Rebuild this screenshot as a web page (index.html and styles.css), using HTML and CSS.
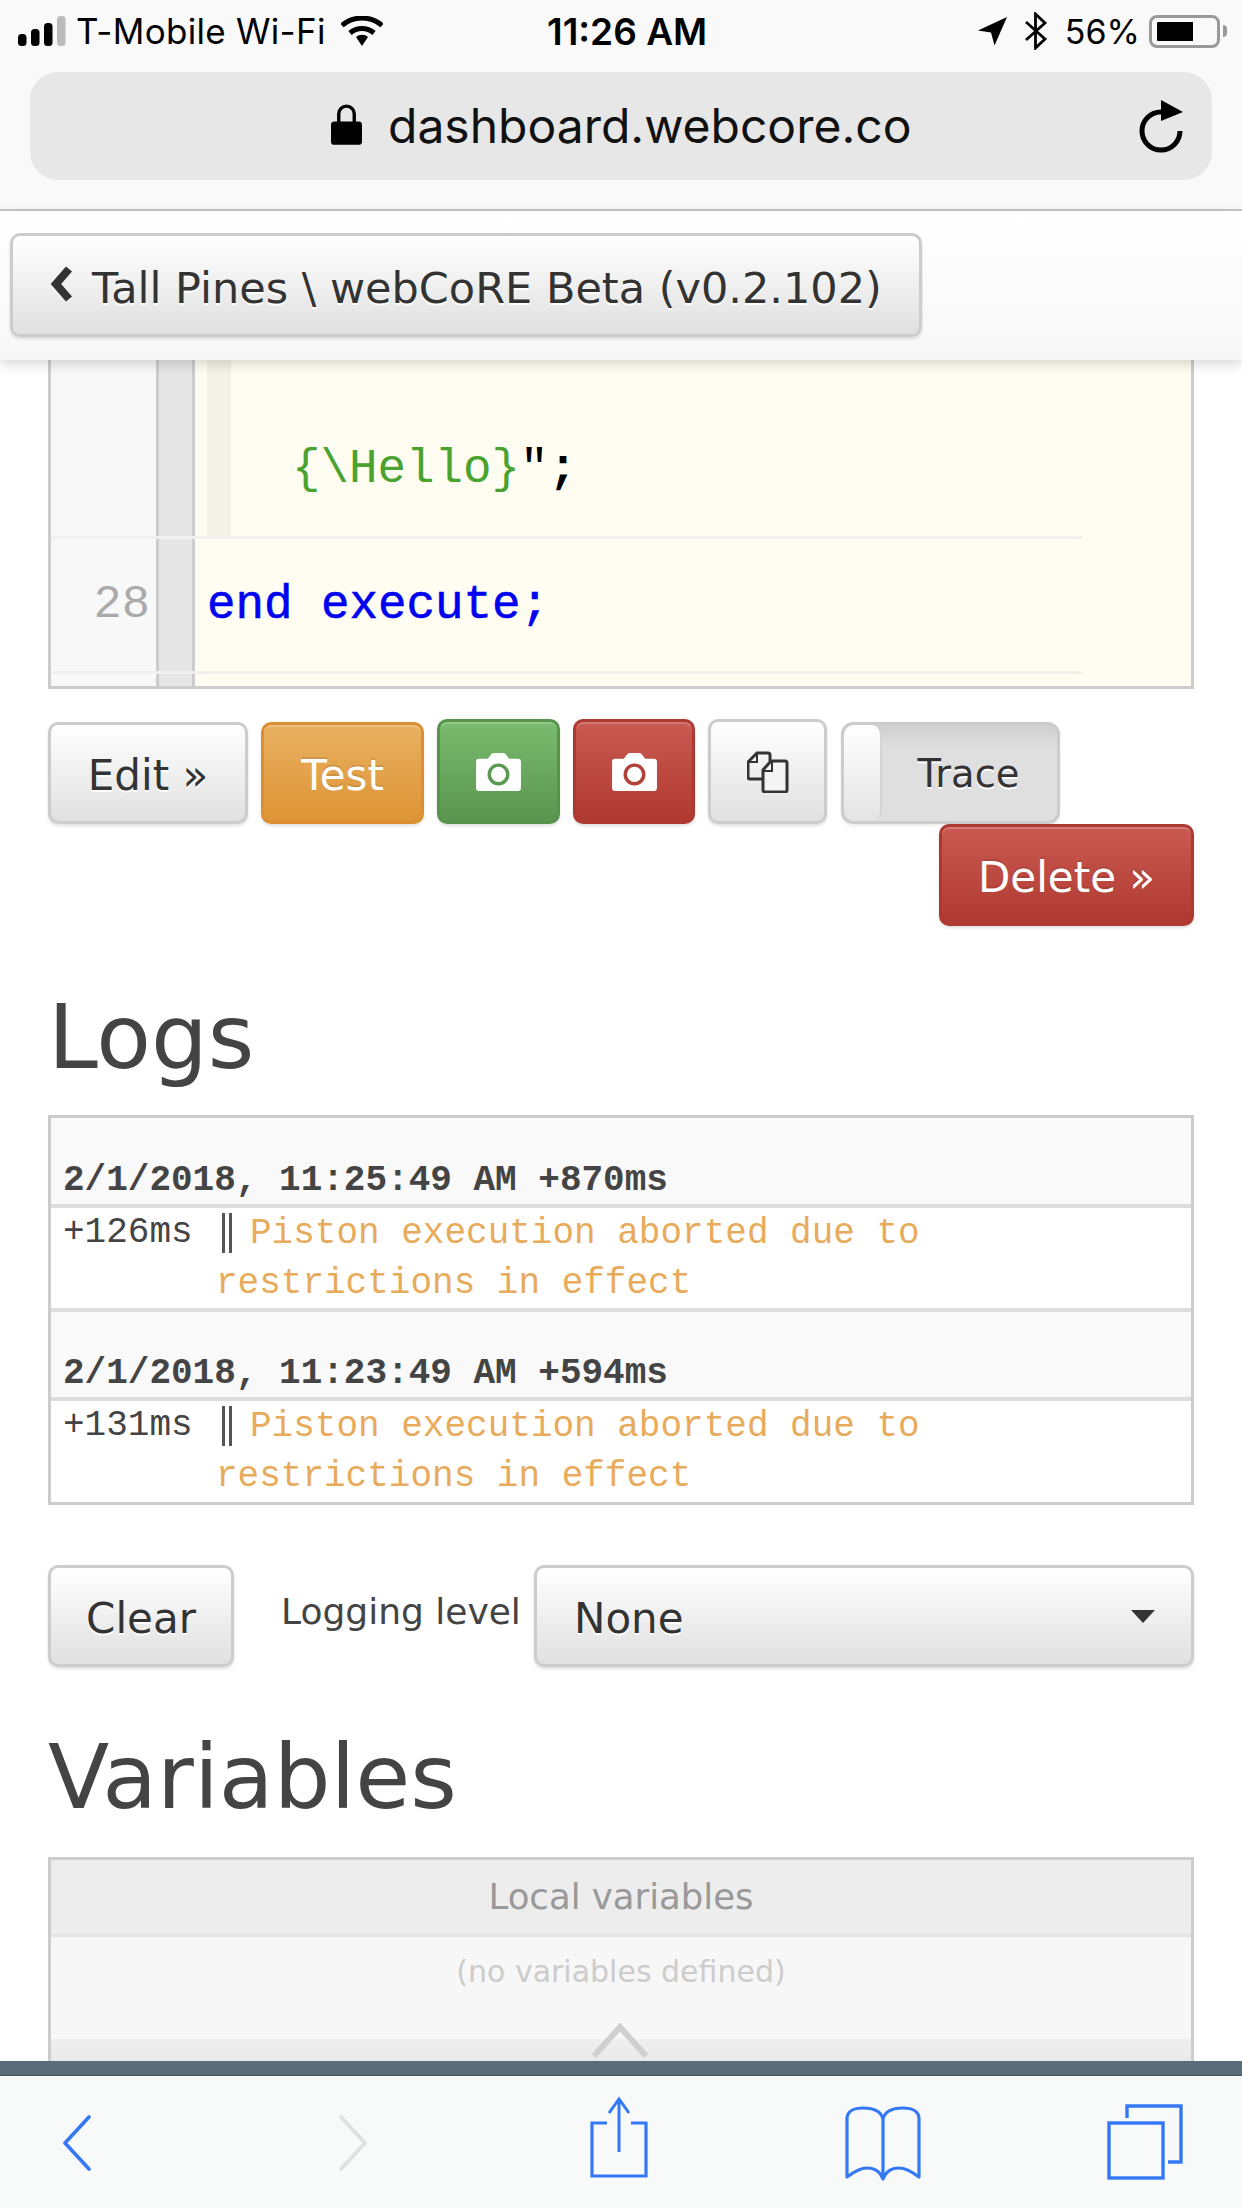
FILE: index.html
```html
<!DOCTYPE html>
<html lang="en">
<head>
<meta charset="utf-8">
<title>webCoRE Dashboard</title>
<link rel="stylesheet" href="styles.css">
</head>
<body>
<div class="screen">
  <header class="chrome">
    <div class="status">
      <div class="status-left">
        <svg class="signal" viewBox="0 0 48 30"><rect x="0" y="18" width="8.500" height="12" rx="3.500" fill="#000"/><rect x="13" y="13" width="8.500" height="17" rx="3.500" fill="#000"/><rect x="26" y="7" width="8.500" height="23" rx="3.500" fill="#000"/><rect x="39" y="0" width="8.500" height="30" rx="3.500" fill="#bbb"/></svg>
        <span class="carrier">T-Mobile Wi-Fi</span>
        <svg class="wifi" viewBox="0 0 42 30"><path d="M1 9.500C12-.5 30-.5 41 9.500" fill="none" stroke="#000" stroke-width="5"/><path d="M9 17c7-6 17-6 24 0" fill="none" stroke="#000" stroke-width="5"/><path d="M15 21c3.600-3 8.400-3 12 0L21 30z" fill="#000"/></svg>
      </div>
      <div class="clock">11:26 AM</div>
      <div class="status-right">
        <svg class="loc" viewBox="0 0 30 30"><path d="M29 1 0 14.500l13 2 3.500 13z" fill="#000"/></svg>
        <svg class="bt" viewBox="0 0 24 38"><path d="M2 10 21 27 11.500 36V2L21 11 2 28" fill="none" stroke="#000" stroke-width="2.800"/></svg>
        <span class="pct">56%</span>
        <span class="battery"><span class="battery-fill"></span></span>
        <span class="battery-tip"></span>
      </div>
    </div>
    <div class="urlbar">
      <svg class="lock" viewBox="0 0 32 42"><path d="M8 20V10a8 8 0 0 1 16 0v10" fill="none" stroke="#000" stroke-width="3.500"/><rect x="0" y="18" width="32" height="24" rx="3.500" fill="#000"/></svg>
      <span class="url">dashboard.webcore.co</span>
      <svg class="reload" viewBox="0 0 46 54"><path d="M41 31A19 19 0 1 1 22 12" fill="none" stroke="#000" stroke-width="5"/><path d="M22 0 44 12 22 21z" fill="#000"/></svg>
    </div>
  </header>

  <div class="pagehead">
    <button class="btn btn-back"><svg class="chev" viewBox="0 0 26 38"><path d="M20 4 7 19l13 15" fill="none" stroke="#333" stroke-width="8"/></svg>Tall Pines \ webCoRE Beta (v0.2.102)</button>
  </div>

  <main class="content">
    <div class="code">
      <div class="code-row code-row-a">
        <div class="gutter"></div>
        <div class="gutter-bar"></div>
        <div class="guide"></div>
        <div class="code-text hello"><span class="str">{\Hello}</span>"<b class="semi">;</b></div>
      </div>
      <div class="code-row code-row-b">
        <div class="gutter num">28</div>
        <div class="gutter-bar"></div>
        <div class="code-text kw">end execute;</div>
      </div>
      <div class="code-row code-row-c">
        <div class="gutter"></div>
        <div class="gutter-bar"></div>
      </div>
    </div>

    <div class="actions">
      <button class="btn btn-edit">Edit »</button>
      <button class="btn btn-test">Test</button>
      <button class="btn btn-green btn-tall">
        <svg class="cam" viewBox="0 0 46 42"><path d="M3 8h9l3-4q1-2 3-2h10q2 0 3 2l3 4h9q3 0 3 3v27q0 3-3 3H3q-3 0-3-3V11q0-3 3-3z" fill="#fff"/><circle cx="23" cy="24" r="9.500" fill="none" stroke="#5a9a50" stroke-width="3.500"/></svg>
      </button>
      <button class="btn btn-red btn-tall">
        <svg class="cam" viewBox="0 0 46 42"><path d="M3 8h9l3-4q1-2 3-2h10q2 0 3 2l3 4h9q3 0 3 3v27q0 3-3 3H3q-3 0-3-3V11q0-3 3-3z" fill="#fff"/><circle cx="23" cy="24" r="9.500" fill="none" stroke="#b0413a" stroke-width="3.500"/></svg>
      </button>
      <button class="btn btn-copy btn-tall">
        <svg class="copy" viewBox="0 0 42 42"><path d="M25 28H3q-2 0-2-2V11l9-9h11q2 0 2 2v6" fill="none" stroke="#333" stroke-width="3"/><path d="M2 11h8V3" fill="none" stroke="#333" stroke-width="2"/><path d="M16 19l8-9h14q2 0 2 2v27q0 2-2 2H18q-2 0-2-2z" fill="#f4f4f4" stroke="#333" stroke-width="3"/><path d="M17 20h8v-9" fill="none" stroke="#333" stroke-width="2"/></svg>
      </button>
      <div class="toggle"><span class="knob"></span><span class="toggle-label">Trace</span></div>
    </div>
    <div class="delete-row"><button class="btn btn-red btn-delete">Delete »</button></div>

    <h2 class="h-logs">Logs</h2>
    <div class="logs">
      <div class="log-head">2/1/2018, 11:25:49 AM +870ms</div>
      <div class="log-body">
        <div class="log-line"><span class="log-time">+126ms</span><span class="log-sep"></span><span class="log-msg">Piston execution aborted due to</span></div>
        <div class="log-line log-cont"><span class="log-msg">restrictions in effect</span></div>
      </div>
      <div class="log-head log-head-next">2/1/2018, 11:23:49 AM +594ms</div>
      <div class="log-body">
        <div class="log-line"><span class="log-time">+131ms</span><span class="log-sep"></span><span class="log-msg">Piston execution aborted due to</span></div>
        <div class="log-line log-cont"><span class="log-msg">restrictions in effect</span></div>
      </div>
    </div>

    <div class="log-controls">
      <button class="btn btn-clear">Clear</button>
      <span class="level-label">Logging level</span>
      <div class="btn select">None<span class="caret"></span></div>
    </div>

    <h2 class="h-vars">Variables</h2>
    <div class="vars">
      <div class="vars-head">Local variables</div>
      <div class="vars-body">(no variables defined)</div>
      <div class="vars-foot">
        <svg class="up" viewBox="0 0 58 36"><path d="M3 33 29 4l26 29" fill="none" stroke="#cfcfcf" stroke-width="6"/></svg>
      </div>
    </div>
  </main>

  <footer class="toolbar">
    <div class="toolbar-strip"></div>
    <div class="toolbar-icons">
      <svg class="tb tb-back" viewBox="0 0 30 56"><path d="M27 2 3 28l24 26" fill="none" stroke="#3478f6" stroke-width="3.600" stroke-linecap="round" stroke-linejoin="round"/></svg>
      <svg class="tb tb-fwd" viewBox="0 0 30 56"><path d="M3 2l24 26L3 54" fill="none" stroke="#e0e0e0" stroke-width="3.600" stroke-linecap="round" stroke-linejoin="round"/></svg>
      <svg class="tb tb-share" viewBox="0 0 58 82"><path d="M17 27H2V80H56V27H41" fill="none" stroke="#3478f6" stroke-width="3.200"/><path d="M29 56V3M19 17 29 3l10 14" fill="none" stroke="#3478f6" stroke-width="3"/></svg>
      <svg class="tb tb-book" viewBox="0 0 76 76"><path d="M38 14C36 6 28 3 18 3 8 3 2 7 2 14v58c8-6 14-9 20-9 8 0 13 3 16 11 3-8 8-11 16-11 6 0 12 3 20 9V14c0-7-6-11-16-11-10 0-18 3-20 11v60" fill="none" stroke="#3478f6" stroke-width="3.200" stroke-linejoin="round"/></svg>
      <svg class="tb tb-tabs" viewBox="0 0 76 76"><rect x="2" y="19" width="54" height="55" fill="none" stroke="#3478f6" stroke-width="3.400"/><path d="M20 14V2H74V58H61" fill="none" stroke="#3478f6" stroke-width="3.400"/></svg>
    </div>
  </footer>
</div>
</body>
</html>
```
FILE: styles.css
```css
* { box-sizing: border-box; }
html, body { margin: 0; padding: 0; }
body { width: 1242px; height: 2208px; overflow: hidden; background: #fff; font-family: "DejaVu Sans", sans-serif; color: #444; }
.screen { width: 1242px; height: 2208px; position: relative; overflow: hidden; display: flex; flex-direction: column; }

.chrome { height: 211px; flex: none; background: #f9f9f9; border-bottom: 2px solid #c8c8c8; padding-top: 10px; }
.status { height: 42px; display: flex; justify-content: space-between; align-items: center; font-family: Inter, sans-serif; color: #000; position: relative; padding: 0 15px 0 18px; }
.status-left, .status-right { display: flex; align-items: center; }
.signal { width: 48px; height: 30px; }
.carrier { font-size: 35px; margin-left: 10px; letter-spacing: .3px; }
.wifi { width: 42px; height: 30px; margin-left: 15px; }
.clock { position: absolute; left: 547px; font-size: 37px; font-weight: 600; }
.loc { width: 30px; height: 30px; }
.bt { width: 24px; height: 38px; margin-left: 16px; }
.pct { font-size: 34px; margin-left: 17px; }
.battery { width: 71px; height: 33px; border: 3px solid #999; border-radius: 8px; margin-left: 9px; padding: 4px; display: flex; }
.battery-fill { width: 36px; height: 100%; background: #000; border-radius: 1px 0 0 1px; margin-left: 1px; }
.battery-tip { width: 4px; height: 12px; background: #999; margin-left: 3px; border-radius: 0 4px 4px 0; }

.urlbar { margin: 20px 30px 0; height: 108px; border-radius: 28px; background: #e7e7e7; display: flex; align-items: center; position: relative; padding-left: 301px; color: #000; font-family: Inter, sans-serif; }
.lock { width: 31px; height: 41px; margin-top: -3px; flex: none; }
.url { font-size: 48px; margin-left: 26px; margin-top: -2px; color: #111; font-weight: 400; }
.reload { width: 46px; height: 54px; position: absolute; right: 27px; top: 28px; }

.pagehead { height: 149px; flex: none; background: linear-gradient(#fff, #f7f7f7); box-shadow: 0 4px 12px rgba(0,0,0,.16); padding: 22px 10px 0; position: relative; z-index: 3; }
.btn { font-family: "DejaVu Sans", sans-serif; color: #333; border: 3px solid #ccc; border-radius: 10px; background: linear-gradient(#fff, #e0e0e0); box-shadow: 0 2px 3px rgba(0,0,0,.12); font-size: 42px; padding: 5px 0 0; display: inline-flex; align-items: center; justify-content: center; text-shadow: 0 2px 0 #fff; }
.btn-back { width: 912px; height: 104px; font-size: 43px; justify-content: flex-start; padding-left: 36px; }
.chev { width: 26px; height: 38px; margin-right: 17px; margin-top: -7px; flex: none; }

.content { flex: 1; padding: 0 48px; min-height: 0; }
.code { height: 329px; width: 1146px; border: 3px solid #ccc; border-top: 0; background: #fffdf1; display: flex; flex-direction: column; }
.code-row { display: flex; position: relative; }
.code-row-a { height: 176px; }
.code-row-b { height: 135px; border-top: 3px solid #f0f0ec; width: 1031px; }
.code-row-c { flex: 1; border-top: 3px solid #f0f0ec; width: 1031px; }
.gutter { width: 105px; background: #f8f8f8; flex: none; }
.gutter-bar { width: 39px; flex: none; background: #e6e6e6; border-left: 3px solid #ccc; border-right: 3px solid #ccc; }
.guide { width: 24px; background: #f3f2e7; margin-left: 12px; flex: none; }
.num { font-family: "Liberation Mono", monospace; font-size: 47px; color: #aaa; text-align: right; padding: 39px 6px 0 0; line-height: 54px; }
.code-text { font-family: "Liberation Mono", monospace; font-size: 47.500px; line-height: 54px; }
.hello { position: absolute; left: 241px; top: 82px; color: #000; }
.str { color: #4aa22f; }
.semi { font-weight: 700; }
.kw { color: #0000f0; padding: 39px 0 0 12px; -webkit-text-stroke: .6px #0000f0; }

.actions { display: flex; align-items: flex-end; margin-top: 30px; height: 105px; gap: 13px; }
.btn-edit { width: 200px; height: 102px; }
.btn-test { width: 163px; height: 102px; color: #fff; border-color: #dc8f32; background: linear-gradient(#e8b060, #de9436); text-shadow: 0 -2px 0 rgba(0,0,0,.1); box-shadow: inset 0 2px 0 rgba(255,255,255,.2), 0 2px 3px rgba(0,0,0,.12); }
.btn-tall { height: 105px; padding-top: 0; }
.btn-green { width: 123px; border-color: #57934c; background: linear-gradient(#79bb6f, #5a954e); box-shadow: inset 0 2px 0 rgba(255,255,255,.2), 0 2px 3px rgba(0,0,0,.12); }
.btn-red { border-color: #ad3931; background: linear-gradient(#c95a52, #b03930); color: #fff; text-shadow: 0 -2px 0 rgba(0,0,0,.1); box-shadow: inset 0 2px 0 rgba(255,255,255,.2), 0 2px 3px rgba(0,0,0,.12); }
.btn-tall.btn-red { width: 122px; }
.btn-copy { width: 119px; }
.cam { width: 45px; height: 41px; }
.copy { width: 42px; height: 42px; }
.toggle { width: 219px; height: 102px; margin-left: 1px; border: 3px solid #ccc; border-radius: 12px; display: flex; align-items: stretch; background: linear-gradient(#cfcfcf, #dfdfdf 25%); box-shadow: 0 2px 3px rgba(0,0,0,.08); }
.knob { width: 38px; flex: none; border-radius: 10px; background: linear-gradient(#fff, #e4e4e4); border-right: 2px solid #d4d4d4; }
.toggle-label { flex: 1; text-align: center; font-size: 38.500px; color: #333; line-height: 98px; text-shadow: 0 2px 0 #fff; padding-right: 2px; }
.delete-row { display: flex; justify-content: flex-end; }
.btn-delete { width: 255px; height: 102px; }

.h-logs { font-weight: 400; font-size: 89.500px; line-height: 102px; margin: 60px 0 0; height: 129px; color: #444; }
.logs { width: 1146px; height: 390px; border: 3px solid #ccc; font-family: "Liberation Mono", monospace; font-size: 36px; }
.log-head { height: 90px; background: #f9f9f9; border-bottom: 4px solid #ddd; padding: 41px 0 0 12px; font-size: 36px; font-weight: 700; color: #444; line-height: 44px; }
.log-head-next { height: 93px; border-top: 4px solid #ddd; padding-top: 40px; }
.log-body { height: 100px; padding: 1px 0 0 12px; background: #fff; }
.log-body:last-child { height: 101px; }
.log-line { display: flex; height: 50px; line-height: 48px; align-items: center; }
.log-time { font-size: 36px; color: #444; width: 159px; line-height: 44px; margin-top: -2px; flex: none; }
.log-sep { width: 10px; height: 40px; border-left: 3px solid #555; border-right: 3px solid #555; flex: none; margin-top: -3px; }
.log-msg { color: #e8ab5b; font-size: 36px; margin-left: 18px; white-space: nowrap; }
.log-cont { padding-left: 153px; }
.log-cont .log-msg { margin-left: 0; }

.log-controls { display: flex; align-items: flex-start; margin-top: 60px; height: 102px; }
.btn-clear { width: 186px; height: 102px; flex: none; }
.level-label { font-size: 36px; color: #444; margin-left: 47px; line-height: 94px; width: 253px; flex: none; white-space: nowrap; }
.select { flex: 1; height: 102px; justify-content: flex-start; padding-left: 37px; position: relative; }
.caret { position: absolute; right: 36px; top: 42px; border-left: 12px solid transparent; border-right: 12px solid transparent; border-top: 13px solid #333; }

.h-vars { font-weight: 400; font-size: 89.500px; line-height: 100px; margin: 60px 0 0; height: 130px; color: #444; }
.vars { width: 1146px; height: 250px; border: 3px solid #ccc; border-bottom: 0; background: #f7f7f7; }
.vars-head { height: 77px; background: #ededed; border-bottom: 3px solid #e4e4e4; font-size: 35.500px; color: #999; text-align: center; line-height: 73px; }
.vars-body { font-size: 30px; color: #ccc; text-align: center; line-height: 70px; height: 102px; }
.vars-foot { height: 68px; background: linear-gradient(#efefef, #dedede); position: relative; }
.up { position: absolute; left: 540px; top: -16px; width: 58px; height: 36px; }

.toolbar { position: absolute; left: 0; right: 0; bottom: 0; height: 147px; background: #f8f9f9; z-index: 4; }
.toolbar-strip { height: 15px; background: #5a6c77; border-bottom: 1px solid #42535e; }
.toolbar-icons { position: relative; height: 132px; }
.tb { position: absolute; }
.tb-back { left: 62px; top: 39px; width: 30px; height: 56px; }
.tb-fwd { left: 338px; top: 39px; width: 30px; height: 56px; }
.tb-share { left: 590px; top: 20px; width: 58px; height: 82px; }
.tb-book { left: 845px; top: 29px; width: 76px; height: 76px; }
.tb-tabs { left: 1107px; top: 28px; width: 76px; height: 76px; }
```
